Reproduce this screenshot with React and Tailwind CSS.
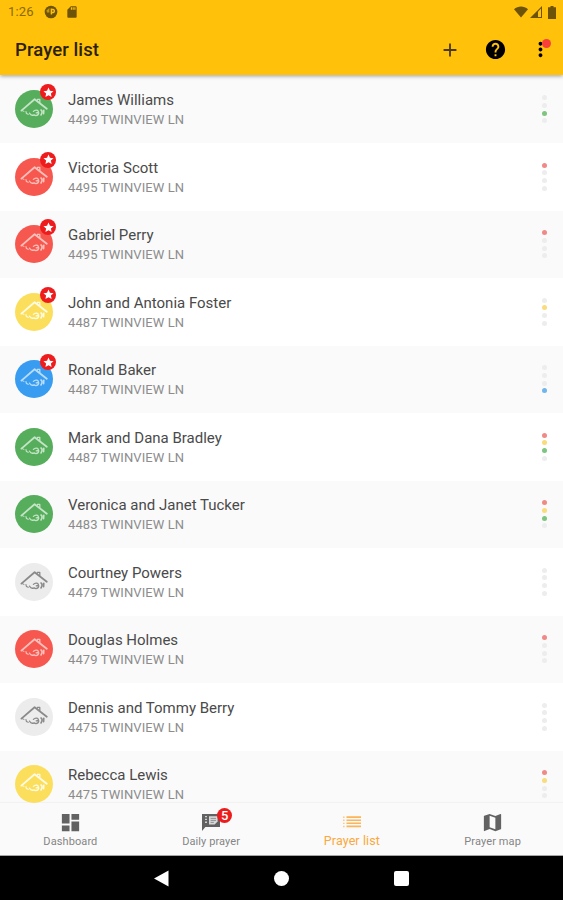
import React from "react";
import { MdAdd, MdHelp, MdMoreVert, MdDashboard, MdMap, MdSdCard } from "react-icons/md";

const people = [
  { name: "James Williams", address: "4499 TWINVIEW LN", color: "green", starred: true, dots: [0, 0, 1, 0] },
  { name: "Victoria Scott", address: "4495 TWINVIEW LN", color: "red", starred: true, dots: [1, 0, 0, 0] },
  { name: "Gabriel Perry", address: "4495 TWINVIEW LN", color: "red", starred: true, dots: [1, 0, 0, 0] },
  { name: "John and Antonia Foster", address: "4487 TWINVIEW LN", color: "yellow", starred: true, dots: [0, 1, 0, 0] },
  { name: "Ronald Baker", address: "4487 TWINVIEW LN", color: "blue", starred: true, dots: [0, 0, 0, 1] },
  { name: "Mark and Dana Bradley", address: "4487 TWINVIEW LN", color: "green", dots: [1, 1, 1, 0] },
  { name: "Veronica and Janet Tucker", address: "4483 TWINVIEW LN", color: "green", dots: [1, 1, 1, 0] },
  { name: "Courtney Powers", address: "4479 TWINVIEW LN", color: "gray", dots: [0, 0, 0, 0] },
  { name: "Douglas Holmes", address: "4479 TWINVIEW LN", color: "red", dots: [1, 0, 0, 0] },
  { name: "Dennis and Tommy Berry", address: "4475 TWINVIEW LN", color: "gray", dots: [0, 0, 0, 0] },
  { name: "Rebecca Lewis", address: "4475 TWINVIEW LN", color: "yellow", dots: [1, 1, 0, 0] },
];

const avatarColors = {
  green: "bg-[#56ad5c] text-[#c4e4c6]",
  red: "bg-[#f6584f] text-[#fbc0bb]",
  yellow: "bg-[#fbdf5c] text-[#fffbe4]",
  blue: "bg-[#389cf0] text-[#b9dcfa]",
  gray: "bg-[#ececec] text-[#8a8a8a]",
};

const dotColors = ["bg-[#f08a86]", "bg-[#f9dc7c]", "bg-[#7dc580]", "bg-[#70b5ec]"];

const HouseIcon = () => (
  <svg viewBox="0 0 38 38" className="size-[38px]" fill="none" stroke="currentColor" strokeLinecap="round" strokeLinejoin="round">
    <path d="M6.4 20.6 19.6 9.2 31.8 18.8" strokeWidth="1.8" />
    <path d="M6.6 20.4 9 21.4" strokeWidth="1" />
    <path d="M22.4 10.2V9.4h2.4v3" strokeWidth="1.3" />
    <path d="M11 21.5l.4 2 1.8.8" strokeWidth="1.2" />
    <path d="M14.6 23.2c1.2 2.4 3 2.4 4.6 1.6M18.4 21.4c1.6-1.6 4-1.6 4.8-.4s-.6 1.8-2 1.8M19.8 25.4c2 .4 3.6-.6 4-2.6" strokeWidth="1.3" />
    <path d="M26 20c1.2.8 1.2 3 0 5M28.8 20.4l-.2 3.4" strokeWidth="1.6" />
  </svg>
);

const PersonRow = ({ person }) => (
  <li className="flex h-[67.5px] shrink-0 items-center pl-[15px] pr-4 odd:bg-[#fafafa] even:bg-white">
    <div className={`relative size-[38px] rounded-full ${avatarColors[person.color]}`}>
      <HouseIcon />
      {person.starred && (
        <span className="absolute -right-[3px] -top-[6px] flex size-4 items-center justify-center rounded-full bg-[#ee1c1c] text-white">
          <svg viewBox="0 0 12 12" className="size-[11px]" fill="currentColor">
            <path d="M6 .6 7.6 4.2l3.9.4-2.9 2.6.8 3.8L6 9.1 2.6 11l.8-3.8L.5 4.6l3.9-.4z" />
          </svg>
        </span>
      )}
    </div>
    <div className="ml-[15px] flex-1 pt-[2px]">
      <p className="text-[15px] leading-[19px] text-[#4a4a4a]">{person.name}</p>
      <p className="text-[13px] leading-[19px] tracking-[0.1px] text-[#8c8c8c]">{person.address}</p>
    </div>
    <div className="flex flex-col gap-[2.6px]">
      {person.dots.map((on, i) => (
        <span key={i} className={`size-[5px] rounded-full ${on ? dotColors[i] : "bg-[#ededed]"}`} />
      ))}
    </div>
  </li>
);

const NotesIcon = () => (
  <svg viewBox="0 0 18 18" className="size-[18px]" fill="none" stroke="currentColor">
    <path d="M0 18V1h18v13H3.4z" fill="currentColor" stroke="none" />
    <path d="M3 3.6h2M3 6.4h2M3 9.2h2" stroke="#d0d0d0" strokeWidth="1.4" />
    <path d="M7 3.2h8.6v5.2l-3 3H7z" fill="#d8d8d8" stroke="none" />
    <path d="M8.6 5.4H14M8.6 7.4H14M8.6 9.4h3.2" strokeWidth=".6" />
  </svg>
);

const ListIcon = () => (
  <svg viewBox="0 0 18 12" className="h-3 w-[18px]" fill="currentColor">
    <path d="M0 .5h1.6v1.4H0zM0 3.6h1.6V5H0zM0 6.7h1.6v1.4H0zM0 9.8h1.6v1.4H0z" opacity=".6" />
    <path d="M3.5.3H18v1.6H3.5zM3.5 3.4H18V5H3.5zM3.5 6.5H18v1.6H3.5zM3.5 9.6H18v1.6H3.5z" opacity=".85" />
  </svg>
);

const tabs = [
  { label: "Dashboard", icon: <MdDashboard size={23} /> },
  { label: "Daily prayer", icon: <NotesIcon />, badge: 5 },
  { label: "Prayer list", icon: <ListIcon />, active: true },
  { label: "Prayer map", icon: <MdMap size={23} /> },
];

const StatusBar = () => (
  <div className="flex h-6 items-center justify-between pl-2 pr-[7px] text-[#6d5307]">
    <div className="flex items-center">
      <span className="w-9 text-[13px] tracking-[0.2px] text-[#8a6a0a]">1:26</span>
      <svg viewBox="0 0 14 14" className="size-[14px]">
        <circle cx="7" cy="7" r="6.3" fill="currentColor" />
        <path d="M7.4 3.6v5.8M7.4 4.4h1.8a1.7 1.7 0 0 1 0 3.2H7.4" fill="none" stroke="#ffc10a" strokeWidth="1.5" />
        <path d="M2.4 5.4 5.4 3v4.6H3z" fill="#ffc10a" opacity=".6" />
      </svg>
      <MdSdCard size={14} className="ml-[7px]" />
    </div>
    <div className="flex items-center">
      <svg viewBox="0 0 14 12" className="h-3 w-[14px]" fill="currentColor">
        <path d="M0 3.2C4-.3 10-.3 14 3.2L7 11.6z" />
      </svg>
      <svg viewBox="0 0 12 12" className="ml-[2px] size-3" fill="currentColor">
        <path d="M0 12 12 0v12zM8 5.8V11h3V2.6z" fillRule="evenodd" />
      </svg>
      <svg viewBox="0 0 8 13" className="ml-[6px] h-[13px] w-2" fill="currentColor">
        <path d="M2.5 0h3v1.3H8V13H0V1.3h2.5z" />
      </svg>
    </div>
  </div>
);

const App = () => {
  return (
    <div className="flex h-[900px] w-[563px] flex-col overflow-hidden bg-white font-[Roboto,sans-serif]">
      <header className="z-10 h-[75px] shrink-0 bg-[#ffc10a] shadow-[0_1px_4px_rgba(0,0,0,0.4)]">
        <StatusBar />
        <div className="flex h-[51px] items-center pl-[15px] pr-[11px]">
          <h1 className="flex-1 pt-[3px] text-[18.5px] font-medium tracking-[0.1px] text-[#2a2108]">Prayer list</h1>
          <MdAdd size={22} className="text-[#4d3b05]" />
          <MdHelp size={23} className="ml-[23px] text-black" />
          <div className="relative ml-[22px]">
            <MdMoreVert size={23} className="text-black" />
            <span className="absolute right-[1px] top-[1px] size-[9px] rounded-full bg-[#f8403b]" />
          </div>
        </div>
      </header>

      <ul className="flex h-[728px] shrink-0 flex-col overflow-hidden pt-[0.5px]">
        {people.map((person) => (
          <PersonRow key={person.name} person={person} />
        ))}
      </ul>

      {/* Bottom tabs */}
      <nav className="grid h-[53px] shrink-0 grid-cols-4 border-b border-[#a5a5a5] bg-[#fafafa] shadow-[0_-1px_1px_rgba(0,0,0,0.03)]">
        {tabs.map((tab) => (
          <button
            key={tab.label}
            className={`flex flex-col items-center pt-[7px] ${
              tab.active ? "text-[#fba83c]" : "text-[#626262]"
            }`}
          >
            <span className="relative flex h-6 items-center justify-center">
              {tab.icon}
              {tab.badge && (
                <span className="absolute -right-[12px] -top-[2px] flex size-[15px] items-center justify-center rounded-full bg-[#ec1c1c] text-[13px] font-medium text-white">
                  {tab.badge}
                </span>
              )}
            </span>
            <span
              className={`leading-[14px] ${
                tab.active ? "text-[12.5px] tracking-[0.1px]" : "mt-px text-[11px] tracking-[0.1px] text-[#858585]"
              }`}
            >
              {tab.label}
            </span>
          </button>
        ))}
      </nav>

      {/* Android navigation */}
      <div className="flex flex-1 items-center justify-center gap-[105px] bg-black text-white">
        <svg viewBox="0 0 15 17" className="h-[17px] w-[15px]" fill="currentColor">
          <path d="M0 8.5 14.5.5v16z" />
        </svg>
        <span className="size-[15px] rounded-full bg-white" />
        <span className="size-[15px] rounded-[2px] bg-white" />
      </div>
    </div>
  );
};

export default App;
